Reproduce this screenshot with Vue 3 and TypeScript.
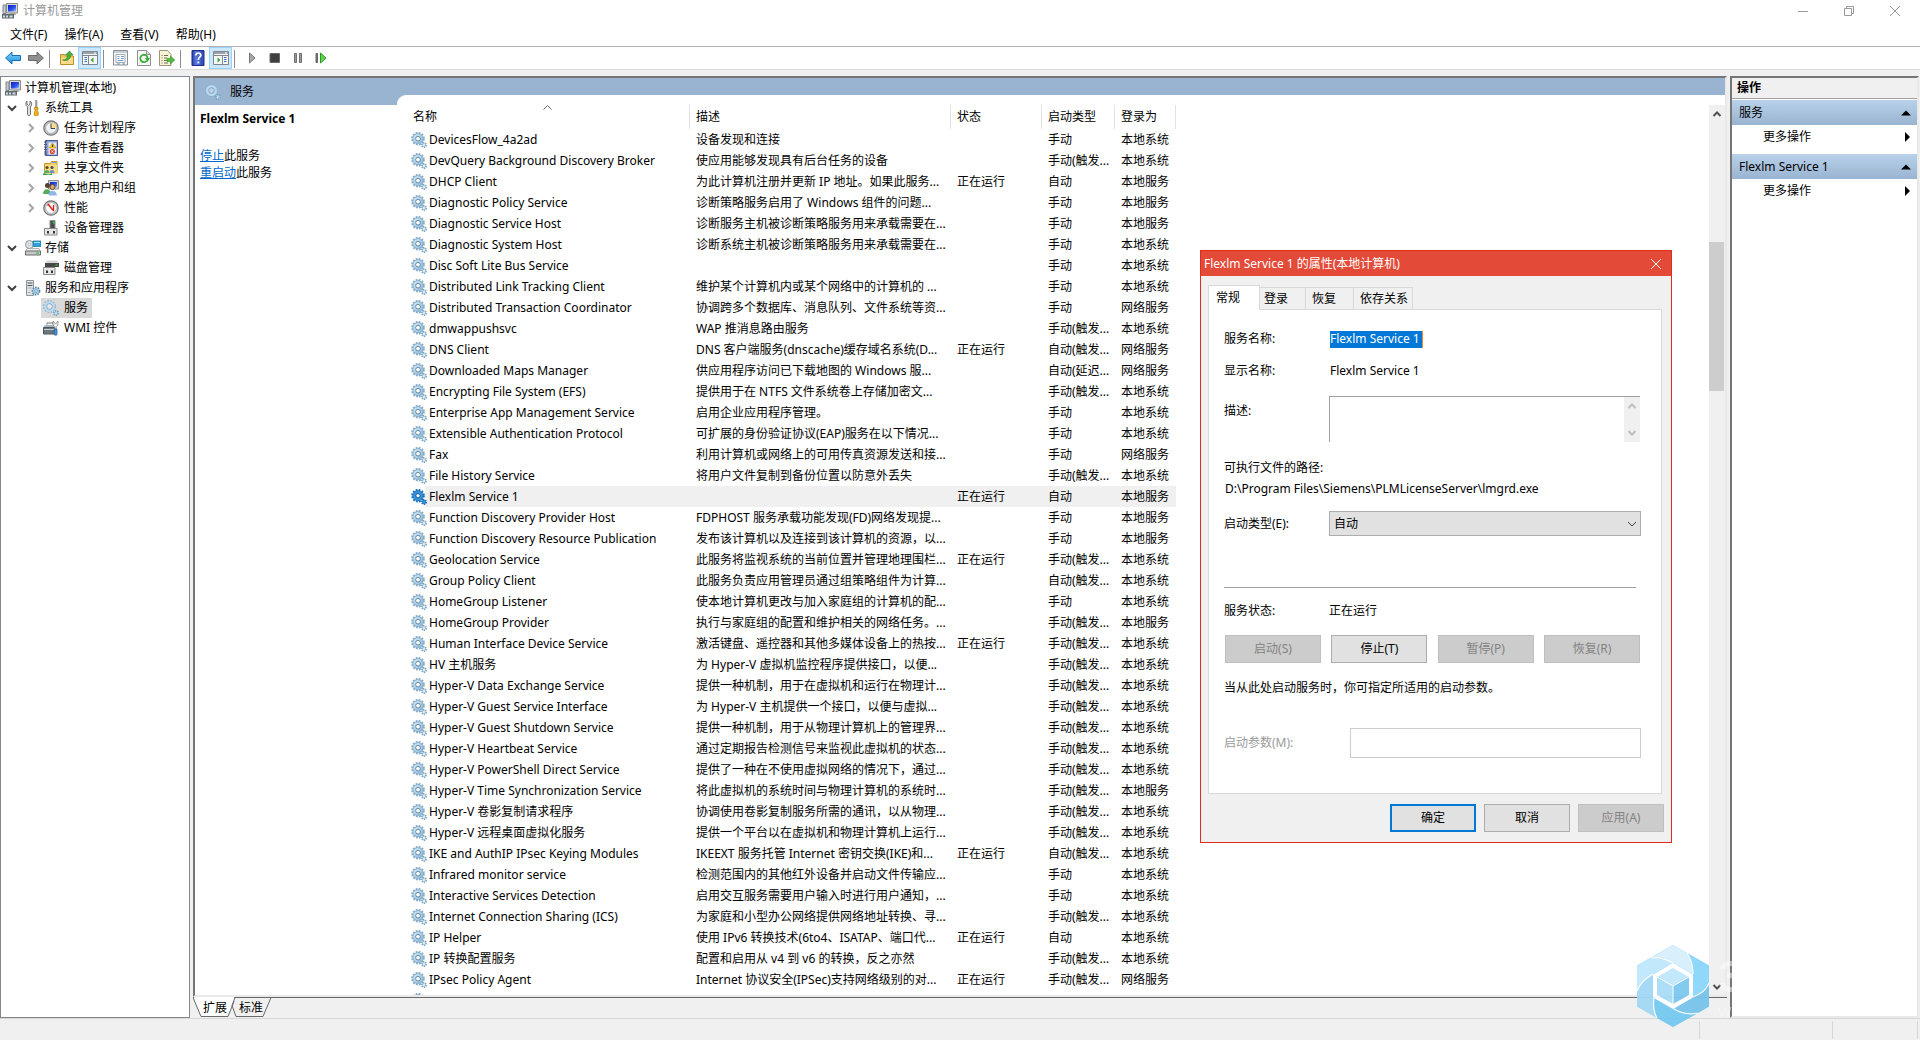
<script setup lang="ts">
import { ref } from 'vue'

interface Service {
  name: string
  desc: string
  running?: boolean
  start: string
  logon: string
}

interface TreeNode {
  label: string
  icon: string
  level: number
  arrow?: 'open' | 'closed'
  selected?: boolean
}

const menus = ['文件(F)', '操作(A)', '查看(V)', '帮助(H)']

const toolGroups = [
  [
    { icon: 'back', title: '后退' },
    { icon: 'forward', title: '前进' },
  ],
  [
    { icon: 'folder-up', title: '上移' },
    { icon: 'pane-left', title: '显示/隐藏控制台树', on: true },
  ],
  [
    { icon: 'props', title: '属性' },
    { icon: 'refresh', title: '刷新' },
    { icon: 'export', title: '导出列表' },
  ],
  [
    { icon: 'help', title: '帮助' },
    { icon: 'pane-right', title: '显示/隐藏操作窗格', on: true },
  ],
  [
    { icon: 'play', title: '启动服务' },
    { icon: 'stop', title: '停止服务' },
    { icon: 'pause', title: '暂停服务' },
    { icon: 'restart', title: '重启动服务' },
  ],
]

const tree: TreeNode[] = [
  { label: '计算机管理(本地)', icon: 'computer', level: 0 },
  { label: '系统工具', icon: 'tools', level: 1, arrow: 'open' },
  { label: '任务计划程序', icon: 'clock', level: 2, arrow: 'closed' },
  { label: '事件查看器', icon: 'events', level: 2, arrow: 'closed' },
  { label: '共享文件夹', icon: 'shared', level: 2, arrow: 'closed' },
  { label: '本地用户和组', icon: 'users', level: 2, arrow: 'closed' },
  { label: '性能', icon: 'perf', level: 2, arrow: 'closed' },
  { label: '设备管理器', icon: 'device', level: 2 },
  { label: '存储', icon: 'storage', level: 1, arrow: 'open' },
  { label: '磁盘管理', icon: 'disk', level: 2 },
  { label: '服务和应用程序', icon: 'server', level: 1, arrow: 'open' },
  { label: '服务', icon: 'gears-pale', level: 2, selected: true },
  { label: 'WMI 控件', icon: 'wmi', level: 2 },
]

const M = '手动'
const MT = '手动(触发...'
const A = '自动'
const AT = '自动(触发...'
const SYS = '本地系统'
const LOC = '本地服务'
const NET = '网络服务'

const services: Service[] = [
  { name: 'DevicesFlow_4a2ad', desc: '设备发现和连接', start: M, logon: SYS },
  { name: 'DevQuery Background Discovery Broker', desc: '使应用能够发现具有后台任务的设备', start: MT, logon: SYS },
  { name: 'DHCP Client', desc: '为此计算机注册并更新 IP 地址。如果此服务...', running: true, start: A, logon: LOC },
  { name: 'Diagnostic Policy Service', desc: '诊断策略服务启用了 Windows 组件的问题...', start: M, logon: LOC },
  { name: 'Diagnostic Service Host', desc: '诊断服务主机被诊断策略服务用来承载需要在...', start: M, logon: LOC },
  { name: 'Diagnostic System Host', desc: '诊断系统主机被诊断策略服务用来承载需要在...', start: M, logon: SYS },
  { name: 'Disc Soft Lite Bus Service', desc: '', start: M, logon: SYS },
  { name: 'Distributed Link Tracking Client', desc: '维护某个计算机内或某个网络中的计算机的 ...', start: M, logon: SYS },
  { name: 'Distributed Transaction Coordinator', desc: '协调跨多个数据库、消息队列、文件系统等资...', start: M, logon: NET },
  { name: 'dmwappushsvc', desc: 'WAP 推消息路由服务', start: MT, logon: SYS },
  { name: 'DNS Client', desc: 'DNS 客户端服务(dnscache)缓存域名系统(D...', running: true, start: AT, logon: NET },
  { name: 'Downloaded Maps Manager', desc: '供应用程序访问已下载地图的 Windows 服...', start: '自动(延迟...', logon: NET },
  { name: 'Encrypting File System (EFS)', desc: '提供用于在 NTFS 文件系统卷上存储加密文...', start: MT, logon: SYS },
  { name: 'Enterprise App Management Service', desc: '启用企业应用程序管理。', start: M, logon: SYS },
  { name: 'Extensible Authentication Protocol', desc: '可扩展的身份验证协议(EAP)服务在以下情况...', start: M, logon: SYS },
  { name: 'Fax', desc: '利用计算机或网络上的可用传真资源发送和接...', start: M, logon: NET },
  { name: 'File History Service', desc: '将用户文件复制到备份位置以防意外丢失', start: MT, logon: SYS },
  { name: 'Flexlm Service 1', desc: '', running: true, start: A, logon: LOC },
  { name: 'Function Discovery Provider Host', desc: 'FDPHOST 服务承载功能发现(FD)网络发现提...', start: M, logon: LOC },
  { name: 'Function Discovery Resource Publication', desc: '发布该计算机以及连接到该计算机的资源，以...', start: M, logon: LOC },
  { name: 'Geolocation Service', desc: '此服务将监视系统的当前位置并管理地理围栏...', running: true, start: MT, logon: SYS },
  { name: 'Group Policy Client', desc: '此服务负责应用管理员通过组策略组件为计算...', start: AT, logon: SYS },
  { name: 'HomeGroup Listener', desc: '使本地计算机更改与加入家庭组的计算机的配...', start: M, logon: SYS },
  { name: 'HomeGroup Provider', desc: '执行与家庭组的配置和维护相关的网络任务。...', start: MT, logon: LOC },
  { name: 'Human Interface Device Service', desc: '激活键盘、遥控器和其他多媒体设备上的热按...', running: true, start: MT, logon: SYS },
  { name: 'HV 主机服务', desc: '为 Hyper-V 虚拟机监控程序提供接口，以便...', start: MT, logon: SYS },
  { name: 'Hyper-V Data Exchange Service', desc: '提供一种机制，用于在虚拟机和运行在物理计...', start: MT, logon: SYS },
  { name: 'Hyper-V Guest Service Interface', desc: '为 Hyper-V 主机提供一个接口，以便与虚拟...', start: MT, logon: SYS },
  { name: 'Hyper-V Guest Shutdown Service', desc: '提供一种机制，用于从物理计算机上的管理界...', start: MT, logon: SYS },
  { name: 'Hyper-V Heartbeat Service', desc: '通过定期报告检测信号来监视此虚拟机的状态...', start: MT, logon: SYS },
  { name: 'Hyper-V PowerShell Direct Service', desc: '提供了一种在不使用虚拟网络的情况下，通过...', start: MT, logon: SYS },
  { name: 'Hyper-V Time Synchronization Service', desc: '将此虚拟机的系统时间与物理计算机的系统时...', start: MT, logon: LOC },
  { name: 'Hyper-V 卷影复制请求程序', desc: '协调使用卷影复制服务所需的通讯，以从物理...', start: MT, logon: SYS },
  { name: 'Hyper-V 远程桌面虚拟化服务', desc: '提供一个平台以在虚拟机和物理计算机上运行...', start: MT, logon: SYS },
  { name: 'IKE and AuthIP IPsec Keying Modules', desc: 'IKEEXT 服务托管 Internet 密钥交换(IKE)和...', running: true, start: AT, logon: SYS },
  { name: 'Infrared monitor service', desc: '检测范围内的其他红外设备并启动文件传输应...', start: M, logon: SYS },
  { name: 'Interactive Services Detection', desc: '启用交互服务需要用户输入时进行用户通知，...', start: M, logon: SYS },
  { name: 'Internet Connection Sharing (ICS)', desc: '为家庭和小型办公网络提供网络地址转换、寻...', start: MT, logon: SYS },
  { name: 'IP Helper', desc: '使用 IPv6 转换技术(6to4、ISATAP、端口代...', running: true, start: A, logon: SYS },
  { name: 'IP 转换配置服务', desc: '配置和启用从 v4 到 v6 的转换，反之亦然', start: MT, logon: SYS },
  { name: 'IPsec Policy Agent', desc: 'Internet 协议安全(IPSec)支持网络级别的对...', running: true, start: MT, logon: NET },
  { name: '', desc: '', start: '', logon: '' },
]

const current = ref('Flexlm Service 1')
const startType = ref('自动')
const params = ref('')
const description = ref('')
const actionGroups = ['服务', 'Flexlm Service 1']
</script>

<template>
  <div class="window">
    <svg class="defs" aria-hidden="true">
      <defs>
        <linearGradient id="gGear" x1="0" y1="0" x2="1" y2="1">
          <stop offset="0" stop-color="#dceefa" />
          <stop offset="1" stop-color="#86b4d4" />
        </linearGradient>
        <linearGradient id="gScreen" x1="0" y1="0" x2="1" y2="1">
          <stop offset="0" stop-color="#0a1cc0" />
          <stop offset="0.6" stop-color="#2f55ec" />
          <stop offset="1" stop-color="#a9c8ff" />
        </linearGradient>
        <linearGradient id="gBlue" x1="0" y1="0" x2="0" y2="1">
          <stop offset="0" stop-color="#7fd4fb" />
          <stop offset="1" stop-color="#1c8fe0" />
        </linearGradient>
        <linearGradient id="gHelp" x1="0" y1="0" x2="1" y2="0">
          <stop offset="0" stop-color="#2438a0" />
          <stop offset="0.3" stop-color="#5a78dc" />
          <stop offset="1" stop-color="#2c49b8" />
        </linearGradient>
      </defs>
      <symbol id="i-computer" viewBox="0 0 16 16">
        <path d="M4.500 0.500h11v9.500h-11z" fill="#d9d9d2" stroke="#8d8d87" />
        <path d="M6 2h8v6.500H6z" fill="url(#gScreen)" />
        <path d="M8 10h5l1 2H7z" fill="#a5a59e" />
        <path d="M1 2h3v8.500H1z" fill="#c2cacd" stroke="#7d888d" />
        <path d="M0 11h12v4.500H0z" fill="#5f6d73" />
        <path d="M1 12.500h2v2H1zM4 12.500h2v2H4zM7.500 12.500h3v2h-3z" fill="#d4dcdf" />
      </symbol>
      <symbol id="i-tools" viewBox="0 0 16 16">
        <path d="M2 1v3l1.500 1.500L5 4V1c1.500 1 2 2.500 1.500 4L5.500 7v7.500c0 1.300-3 1.300-3 0V7L1.200 5.500C.5 4 .8 2 2 1z" fill="#dedede" stroke="#777" />
        <path d="M10.500.5h1.500v7h-1.500z" fill="#a7a7a7" stroke="#777" stroke-width=".5" />
        <path d="M9.500 7.500h3.500v2.200h-1v1l1.200 1v3.500c-.8.8-3 .8-3.900 0v-3.500l1.200-1v-1h-1z" fill="#f0b21c" stroke="#b77f05" stroke-width=".7" />
      </symbol>
      <symbol id="i-clock" viewBox="0 0 16 16">
        <circle cx="8" cy="8" r="7.200" fill="#c9c9c9" stroke="#747474" stroke-width="1.200" />
        <circle cx="8" cy="8" r="5.400" fill="#eef4fa" stroke="#9d9d9d" stroke-width=".7" />
        <path d="M8 8V2.600A5.400 5.400 0 0 1 13.400 8z" fill="#ffdc8a" />
        <path d="M8 3.500V8.500h4" fill="none" stroke="#444" />
      </symbol>
      <symbol id="i-events" viewBox="0 0 16 16">
        <path d="M2.500.5h12v15h-12z" fill="#8ea2d8" stroke="#46568f" />
        <path d="M5.500 2.500h8v12h-8z" fill="#e9e9f2" />
        <path d="M1 2h3M1 4.500h3M1 7h3M1 9.500h3M1 12h3M1 14h3" stroke="#555d78" />
        <path d="M9.500 3l3.500 5H6.200z" fill="#ffd21f" stroke="#b58a00" stroke-width=".6" />
        <path d="M9.600 4.500v2.500" stroke="#222" />
        <circle cx="9.300" cy="11.500" r="2.600" fill="#d9412f" />
        <path d="M8.200 10.400l2.200 2.200m0-2.200l-2.200 2.200" stroke="#fff" stroke-width=".9" />
      </symbol>
      <symbol id="i-shared" viewBox="0 0 16 16">
        <path d="M1.500 3.500h6l1-2h5.500v12H1.500z" fill="#f2cf68" stroke="#c3972a" />
        <path d="M9 2.500h4" stroke="#5aa9e6" />
        <path d="M2 5h12v9H2z" fill="#f8dc85" />
        <circle cx="4" cy="7.500" r="1.600" fill="#6b4523" />
        <circle cx="9" cy="7.500" r="1.600" fill="#4b4f5c" />
        <path d="M1.500 13c0-4 5-4 5 0z" fill="#4faf6b" />
        <path d="M6.500 13c0-4 5-4 5 0z" fill="#6e8fc7" />
        <path d="M0 13.500c2-1 4 1.500 7 .5l2-1v2H0z" fill="#38a860" />
      </symbol>
      <symbol id="i-users" viewBox="0 0 16 16">
        <path d="M5.500.5h10v8.500h-10z" fill="#d9d9d2" stroke="#8d8d87" />
        <path d="M7 2h7v5.500H7z" fill="url(#gScreen)" />
        <circle cx="4.500" cy="5.500" r="2.500" fill="#59402a" />
        <circle cx="9.500" cy="7" r="2.500" fill="#d9a877" stroke="#6a4a2b" />
        <path d="M0 14c0-6.500 7.500-6.500 8 0z" fill="#58ab5b" />
        <path d="M5.500 15.500c0-6.500 8-6.500 8.500 0z" fill="#8cb9e8" />
      </symbol>
      <symbol id="i-perf" viewBox="0 0 16 16">
        <circle cx="8" cy="8" r="7.200" fill="#d4d4d4" stroke="#6e6e6e" stroke-width="1.200" />
        <circle cx="8" cy="8" r="5.400" fill="#fff" stroke="#9d9d9d" stroke-width=".7" />
        <path d="M4.500 5.500l1-1L8.500 8.500 11 11M10.500 5v6" fill="none" stroke="#d52119" stroke-width="1.400" />
      </symbol>
      <symbol id="i-device" viewBox="0 0 16 16">
        <path d="M7 0.500h5v9H7z" fill="#4b4b4b" stroke="#8a8a8a" />
        <circle cx="10.500" cy="2.500" r="1" fill="#37d845" />
        <path d="M1.500 8.500h12.500v6.500H1.500z" fill="#e6e6e6" stroke="#8b8b8b" />
        <path d="M4 11h2v2.500H4zM10 11h2v2.500h-2z" fill="#333" />
      </symbol>
      <symbol id="i-storage" viewBox="0 0 16 16">
        <circle cx="4.500" cy="4.500" r="4" fill="#dfe4e6" stroke="#8f989c" />
        <circle cx="4.500" cy="4.500" r="1.200" fill="#fff" stroke="#8f989c" stroke-width=".6" />
        <path d="M8 1h8v5.500H8z" fill="#2aa0d8" stroke="#1c6f9c" stroke-width=".7" />
        <path d="M9 2h6v1H9z" fill="#a9e2fa" />
        <path d="M2 8.500h12l1.500 3H.5z" fill="#ededed" stroke="#9b9b9b" stroke-width=".7" />
        <path d="M.5 11h15v4H.5z" fill="#c7c7c7" stroke="#6d6d6d" />
        <path d="M11 12.500h3v1.200h-3z" fill="#35c545" />
      </symbol>
      <symbol id="i-disk" viewBox="0 0 16 16">
        <path d="M4 0.500h10l1.500 2.500H2.500z" fill="#d4d4d4" />
        <path d="M2 3h14v4H2z" fill="#474747" />
        <path d="M12.500 4.500h2v1h-2z" fill="#37d845" />
        <path d="M.5 7.500h11.500v7H.5z" fill="#e6e6e6" stroke="#8b8b8b" />
        <path d="M3 10.500h2v2.500H3zM8 10.500h2v2.500H8z" fill="#333" />
      </symbol>
      <symbol id="i-server" viewBox="0 0 16 16">
        <path d="M1.500.5h7v15h-7z" fill="#dfe3e6" stroke="#8d969b" />
        <path d="M2.500 3h5M2.500 5.500h5" stroke="#4e5a60" />
        <path d="M2.500 8h4M2.500 12.500h3" stroke="#a5afb4" />
        <circle cx="11" cy="11" r="3.600" fill="#a9cbe2" stroke="#5688ac" stroke-width="1.600" stroke-dasharray="1.600 1" />
        <circle cx="11" cy="11" r="2.800" fill="#a9cbe2" />
        <circle cx="11" cy="11" r="1.300" fill="#fff" stroke="#5688ac" stroke-width=".7" />
      </symbol>
      <symbol id="i-gears" viewBox="0 0 16 16">
        <circle cx="7" cy="6.700" r="5.800" fill="none" stroke="#86abc6" stroke-width="2" stroke-dasharray="1.800 1.240" />
        <circle cx="7" cy="6.700" r="5.100" fill="url(#gGear)" stroke="#7ba6c6" stroke-width=".8" />
        <circle cx="7" cy="6.700" r="2.300" fill="#fff" stroke="#567f9f" stroke-width=".9" />
        <circle cx="13" cy="13" r="2.200" fill="#c2dbeb" stroke="#7ba4c2" stroke-width="1.600" stroke-dasharray="1.200 .9" />
        <circle cx="13" cy="13" r=".8" fill="#fff" />
      </symbol>
      <symbol id="i-gears-blue" viewBox="0 0 16 16">
        <circle cx="7" cy="6.700" r="5.800" fill="none" stroke="#1673bd" stroke-width="2" stroke-dasharray="1.800 1.240" />
        <circle cx="7" cy="6.700" r="5.100" fill="#3c94d8" stroke="#0f6bb8" stroke-width=".8" />
        <circle cx="7" cy="6.700" r="2.200" fill="#eaf5ff" stroke="#0a5a9f" />
        <circle cx="13" cy="13" r="2.200" fill="#3c94d8" stroke="#0f6bb8" stroke-width="1.600" stroke-dasharray="1.200 .9" />
      </symbol>
      <symbol id="i-gears-pale" viewBox="0 0 16 16">
        <circle cx="6.500" cy="6.500" r="5.500" fill="none" stroke="#86aecb" stroke-width="1.800" stroke-dasharray="1.700 1.180" />
        <circle cx="6.500" cy="6.500" r="4.200" fill="none" stroke="#b9d9ee" stroke-width="2.600" />
        <circle cx="6.500" cy="6.500" r="2.800" fill="#fff" fill-opacity=".4" stroke="#6b98b9" stroke-width=".7" />
        <circle cx="13" cy="13" r="2.200" fill="#bcd8ea" stroke="#6f9dbd" stroke-width="1.500" stroke-dasharray="1.200 .9" />
      </symbol>
      <symbol id="i-wmi" viewBox="0 0 16 16">
        <path d="M4 4.500V3h6v1.500" fill="none" stroke="#6b7780" />
        <path d="M2 5h10l-1 3H0z" fill="#a9b3b9" />
        <path d="M.5 7.500h11v6.500H.5z" fill="#6c7880" stroke="#4d575d" />
        <path d="M1 9.500h10" stroke="#c4ccd0" />
        <path d="M10 1l2.500 3L15 1v4l-1.800 1.500V9h-1.500V6.500L10 5z" fill="#ececec" stroke="#7c7c7c" stroke-width=".7" />
        <path d="M11.200 9h2.800v5.500c-.5 1-2.300 1-2.800 0z" fill="#4a90d6" stroke="#245c98" stroke-width=".7" />
      </symbol>

      <symbol id="i-back" viewBox="0 0 16 16">
        <path d="M.6 8L7 2v3.500h8.500v5H7V14z" fill="url(#gBlue)" stroke="#1a6fb4" />
      </symbol>
      <symbol id="i-forward" viewBox="0 0 16 16">
        <path d="M15.400 8L9 2v3.500H.5v5H9V14z" fill="#8f8f8f" stroke="#6b6b6b" />
      </symbol>
      <symbol id="i-folder-up" viewBox="0 0 16 16">
        <path d="M1.500 4.500h4l1 1.500h8v8.500h-13z" fill="#eec65d" stroke="#b98f2a" />
        <path d="M2 7.500h12v6.500H2z" fill="#f8dc8c" />
        <path d="M3.500 10c3 0 5-1.500 5.200-5H6.500L10.500 1l3.500 4h-2.300C11.500 9.500 8 11.500 3.500 10z" fill="#45b33b" stroke="#2b8126" stroke-width=".6" />
      </symbol>
      <symbol id="i-pane-left" viewBox="0 0 16 16">
        <path d="M.5 1.500h15v13H.5z" fill="#f4f6f8" stroke="#80868c" />
        <path d="M1 2h14v2H1z" fill="#9aa3ab" />
        <path d="M12 2.500h2v1h-2z" fill="#fff" />
        <path d="M1 5.500h14M6.500 6v8" stroke="#80868c" />
        <path d="M2.500 7.500h2.500M2.500 9.500h2.500M2.500 11.500h2.500" stroke="#3a72c0" />
        <path d="M11.500 7.500v5L8.500 10z" fill="#3aa832" />
      </symbol>
      <symbol id="i-pane-right" viewBox="0 0 16 16">
        <path d="M.5 1.500h15v13H.5z" fill="#f4f6f8" stroke="#80868c" />
        <path d="M1 2h14v2H1z" fill="#9aa3ab" />
        <path d="M12 2.500h2v1h-2z" fill="#fff" />
        <path d="M1 5.500h14M9.500 6v8" stroke="#80868c" />
        <path d="M11 7.500h2.500M11 9.500h2.500M11 11.500h2.500" stroke="#3a72c0" />
        <path d="M4.500 7.500v5l3-2.500z" fill="#3aa832" />
      </symbol>
      <symbol id="i-props" viewBox="0 0 16 16">
        <path d="M.5.5h14v14.500H.5z" fill="#f4f6f8" stroke="#8a9097" />
        <path d="M1 2h13" stroke="#9aa3ab" />
        <path d="M3 4.500h9v8H3z" fill="#fff" stroke="#a5adb5" />
        <path d="M4.500 6.500h2M8 6.500h3M4.500 8.500h2M8 8.500h3M4.500 10.500h6" stroke="#7a9dd0" />
        <path d="M4 14h3M9 14h3" stroke="#8a9097" />
      </symbol>
      <symbol id="i-refresh" viewBox="0 0 16 16">
        <path d="M1.500.5h9l4 4v11h-13z" fill="#f7f7f7" stroke="#8f8f8f" />
        <path d="M10.500.5v4h4" fill="#ddd" stroke="#8f8f8f" />
        <path d="M10.800 10.800A3.700 3.700 0 1 1 11.600 8" fill="none" stroke="#3aac38" stroke-width="1.800" />
        <path d="M9 8h5l-2.500 4z" fill="#3aac38" />
      </symbol>
      <symbol id="i-export" viewBox="0 0 16 16">
        <path d="M.5.5h8l3.500 4v11H.5z" fill="#fbf3d2" stroke="#9a957e" />
        <path d="M2.500 5.500h1M5 5.500h4M2.500 8h1M5 8h3M2.500 10.500h1M5 10.500h3M2.500 13h1M5 13h4" stroke="#6b6b6b" />
        <path d="M8 8.500h3.500V6l4.300 4-4.300 4v-2.500H8z" fill="#4fbe3e" stroke="#36922a" stroke-width=".6" />
      </symbol>
      <symbol id="i-help" viewBox="0 0 16 16">
        <path d="M2 .5h12v15H2z" fill="url(#gHelp)" stroke="#1c2f88" />
        <path d="M5.800 5.600C5.800 2 11 2.300 10.800 5.300 10.700 7.200 8.300 7.300 8.300 10" fill="none" stroke="#fff" stroke-width="1.700" />
        <path d="M7.400 11.500h1.900v1.900H7.400z" fill="#fff" />
      </symbol>
      <symbol id="i-play" viewBox="0 0 16 16">
        <path d="M5.500 3v10l5.500-5z" fill="#a9a9a9" stroke="#767676" />
      </symbol>
      <symbol id="i-stop" viewBox="0 0 16 16">
        <path d="M3 3.500h9.500v9H3z" fill="#3f3f3f" stroke="#6a6a6a" />
      </symbol>
      <symbol id="i-pause" viewBox="0 0 16 16">
        <path d="M4.500 3.500h2v9h-2zM9.500 3.500h2v9h-2z" fill="#999" stroke="#737373" />
      </symbol>
      <symbol id="i-restart" viewBox="0 0 16 16">
        <path d="M3 3.500h1.500v9H3z" fill="#777" stroke="#666" />
        <path d="M7.500 3v10l5.500-5z" fill="#5fd44a" stroke="#2b9a22" />
      </symbol>
    </svg>

    <header class="titlebar">
      <svg class="ico"><use href="#i-computer" /></svg>
      <span class="caption">计算机管理</span>
      <div class="winbtns">
        <button type="button" aria-label="最小化"><svg viewBox="0 0 12 12"><path d="M1 6.500h10" /></svg></button>
        <button type="button" aria-label="向下还原"><svg viewBox="0 0 12 12"><path d="M1.500 3.500h7v7h-7zM3.500 3.500v-2h7v7h-2" /></svg></button>
        <button type="button" aria-label="关闭"><svg viewBox="0 0 12 12"><path d="M1 1l10 10M11 1L1 11" /></svg></button>
      </div>
    </header>

    <nav class="menubar">
      <button v-for="m in menus" :key="m" type="button">{{ m }}</button>
    </nav>

    <div class="toolbar">
      <div v-for="(g, i) in toolGroups" :key="i" class="group">
        <button v-for="t in g" :key="t.icon" type="button" :class="{ on: 'on' in t }" :aria-label="t.title">
          <svg class="ico"><use :href="'#i-' + t.icon" /></svg>
        </button>
      </div>
    </div>

    <main class="panes">
      <aside class="tree">
        <ul>
          <li v-for="n in tree" :key="n.icon" :class="['lv' + n.level, { selected: n.selected }]">
            <span class="twisty">
              <svg v-if="n.arrow === 'open'" viewBox="0 0 10 10"><path d="M1 3l4 4 4-4" stroke="#404040" /></svg>
              <svg v-else-if="n.arrow === 'closed'" viewBox="0 0 10 10"><path d="M3 1l4 4-4 4" stroke="#a6a6a6" /></svg>
            </span>
            <span class="node">
              <svg class="ico"><use :href="'#i-' + n.icon" /></svg>
              <span>{{ n.label }}</span>
            </span>
          </li>
        </ul>
      </aside>

      <section class="center">
        <div class="view">
          <div class="info">
            <h1><svg class="ico"><use href="#i-gears-pale" /></svg>服务</h1>
            <div class="detail">
              <h2>{{ current }}</h2>
              <p><a href="#stop">停止</a>此服务</p>
              <p><a href="#restart">重启动</a>此服务</p>
            </div>
          </div>
          <div class="list">
            <div class="scroller">
              <table>
                <colgroup>
                  <col class="c-name" /><col class="c-desc" /><col class="c-state" /><col class="c-start" /><col class="c-logon" />
                </colgroup>
                <thead>
                  <tr>
                    <th class="sorted">名称<svg viewBox="0 0 9 5"><path d="M.5 4.500l4-4 4 4" /></svg></th>
                    <th>描述</th>
                    <th>状态</th>
                    <th>启动类型</th>
                    <th>登录为</th>
                  </tr>
                </thead>
                <tbody>
                  <tr v-for="s in services" :key="s.name" :class="{ active: s.name === current }">
                    <td>
                      <div class="svc">
                        <svg class="ico"><use :href="s.name === current ? '#i-gears-blue' : '#i-gears'" /></svg>
                        <span>{{ s.name }}</span>
                      </div>
                    </td>
                    <td>{{ s.desc }}</td>
                    <td>{{ s.running ? '正在运行' : '' }}</td>
                    <td>{{ s.start }}</td>
                    <td>{{ s.logon }}</td>
                  </tr>
                </tbody>
              </table>
            </div>
            <div class="vbar">
              <button type="button" aria-label="向上滚动"><svg viewBox="0 0 10 10"><path d="M1.500 7L5 3.500 8.500 7" /></svg></button>
              <span class="before"></span>
              <span class="thumb"></span>
              <span class="after"></span>
              <button type="button" aria-label="向下滚动"><svg viewBox="0 0 10 10"><path d="M1.500 3L5 6.500 8.500 3" /></svg></button>
            </div>
          </div>
        </div>
        <div class="sheets">
          <svg class="outline" viewBox="0 0 80 21" aria-hidden="true">
            <path d="M1 0l7 19.500h27L41.500 0z" fill="#fff" />
            <path d="M0 .5l8 19h27l6-15M43 .5h37M42 .5l-3 8 4 11h27L78 .5" fill="none" stroke="#696969" />
          </svg>
          <button type="button">扩展</button>
          <button type="button">标准</button>
        </div>
      </section>

      <aside class="actions">
        <h3>操作</h3>
        <section v-for="g in actionGroups" :key="g">
          <button type="button" class="band"><span>{{ g }}</span><svg viewBox="0 0 10 10"><path d="M0 7.500L5 2.500l5 5z" /></svg></button>
          <button type="button" class="more"><span>更多操作</span><svg viewBox="0 0 10 10"><path d="M3 0l5 5-5 5z" /></svg></button>
        </section>
      </aside>
    </main>

    <footer class="status"><span></span><span></span><span></span></footer>

    <div class="watermark" aria-hidden="true">
      <svg viewBox="0 0 72 82">
        <path d="M0 20.500L36 0l36 20.500v41L36 82 0 61.500z" fill="#8fd6f8" />
        <path d="M14 13L36 0l14 8c5 7 6 14 6 21L36 18z" fill="#d6effc" />
        <path d="M50 8l22 12.500V38c-3 8-9 11-16 14V29c0-7-1-14-6-21z" fill="#8ad6fa" />
        <path d="M72 38v23.500L61 68c-9 2-17 0-24-4l19-12c7-3 13-6 16-14z" fill="#77c3ea" />
        <path d="M61 68L36 82 20 73c-4-7-4-13-3-20l20 11c7 4 15 6 24 4z" fill="#75c9f1" />
        <path d="M20 73L0 61.500V46c3-8 9-13 16-17v24c0 7 0 13 4 20z" fill="#a1d8f5" />
        <path d="M0 46V20.500L14 13c8-1 15 1 22 5L16 29C9 33 3 38 0 46z" fill="#bfe7fc" />
        <path d="M14 13c8-1 15 1 22 5M50 8c5 7 6 14 6 21M72 38c-3 8-9 11-16 14M61 68c-9 2-17 0-24-4M20 73c-4-7-4-13-3-20M0 46c3-8 9-13 16-17" fill="none" stroke="#fff" stroke-width="1.200" />
        <path d="M36 18l20 11.500v23L36 64 16 52.500v-23z" fill="#fff" />
        <path d="M36 23l16 9-16 9-16-9z" fill="#bfe7fc" />
        <path d="M20 32l16 9v18l-16-9z" fill="#a9ddf7" />
        <path d="M52 32l-16 9v18l16-9z" fill="#7dc8ef" />
        <path d="M20 32l16 9 16-9M36 41v18" fill="none" stroke="#fff" />
      </svg>
      <div class="mark"><b>3</b><span>W</span></div>
    </div>

    <div class="dialog" role="dialog" aria-labelledby="dlg-title">
      <header>
        <span id="dlg-title">Flexlm Service 1 的属性(本地计算机)</span>
        <button type="button" aria-label="关闭"><svg viewBox="0 0 12 12"><path d="M1 1l10 10M11 1L1 11" /></svg></button>
      </header>
      <div class="tabs" role="tablist">
        <button type="button" role="tab" class="cur">常规</button>
        <button type="button" role="tab">登录</button>
        <button type="button" role="tab">恢复</button>
        <button type="button" role="tab">依存关系</button>
      </div>
      <div class="sheet">
        <div class="row"><label for="f-name">服务名称:</label><input id="f-name" class="picked" readonly :value="current" /></div>
        <div class="row"><label for="f-disp">显示名称:</label><input id="f-disp" class="plain" readonly :value="current" /></div>
        <div class="row desc">
          <label for="f-desc">描述:</label>
          <div class="memo">
            <textarea id="f-desc" v-model="description" readonly></textarea>
            <div class="mini">
              <svg viewBox="0 0 10 10"><path d="M1.500 7L5 3.500 8.500 7" /></svg>
              <svg viewBox="0 0 10 10"><path d="M1.500 3L5 6.500 8.500 3" /></svg>
            </div>
          </div>
        </div>
        <div class="path">
          <p>可执行文件的路径:</p>
          <p>D:\Program Files\Siemens\PLMLicenseServer\lmgrd.exe</p>
        </div>
        <div class="row type">
          <label for="f-type">启动类型(E):</label>
          <div class="combo">
            <select id="f-type" v-model="startType"><option>自动</option></select>
            <svg viewBox="0 0 10 10"><path d="M1 3l4 4 4-4" /></svg>
          </div>
        </div>
        <hr />
        <div class="row state"><span class="lab">服务状态:</span><span>正在运行</span></div>
        <div class="ctl">
          <button type="button" disabled>启动(S)</button>
          <button type="button">停止(T)</button>
          <button type="button" disabled>暂停(P)</button>
          <button type="button" disabled>恢复(R)</button>
        </div>
        <p class="hint">当从此处启动服务时，你可指定所适用的启动参数。</p>
        <div class="row args">
          <label for="f-args">启动参数(M):</label>
          <input id="f-args" v-model="params" disabled />
        </div>
      </div>
      <footer>
        <button type="button" class="default">确定</button>
        <button type="button">取消</button>
        <button type="button" disabled>应用(A)</button>
      </footer>
    </div>
  </div>
</template>

<style>
body {
  margin: 0;
  background: #f0f0f0;
}
</style>

<style scoped>
.window,
.window * {
  box-sizing: border-box;
}
.window {
  position: relative;
  display: flex;
  flex-direction: column;
  height: 100vh;
  overflow: hidden;
  background: #f0f0f0;
  color: #000;
  font: 12px/20px "Noto Sans", "Noto Sans CJK SC", sans-serif;
}
.window button,
.window input,
.window select,
.window textarea {
  margin: 0;
  padding: 0;
  border: 0;
  border-radius: 0;
  background: none;
  color: inherit;
  font: inherit;
  outline: 0;
}
.window h1,
.window h2,
.window h3,
.window p,
.window ul {
  margin: 0;
  padding: 0;
  font-size: 12px;
  list-style: none;
}
.defs {
  position: absolute;
  width: 0;
  height: 0;
}
.ico {
  display: block;
  flex: none;
  width: 16px;
  height: 16px;
}

.titlebar {
  display: flex;
  align-items: center;
  flex: none;
  height: 22px;
  padding: 0 2px;
  background: #fff;
}
.caption {
  flex: 1;
  padding-left: 5px;
  color: #999;
}
.winbtns {
  display: flex;
}
.winbtns button {
  display: flex;
  justify-content: center;
  align-items: center;
  width: 46px;
  height: 20px;
}
.winbtns svg {
  width: 12px;
  height: 12px;
  fill: none;
  stroke: #999;
}
.menubar {
  display: flex;
  gap: 17px;
  flex: none;
  height: 25px;
  padding: 3px 10px;
  border-bottom: 1px solid #b2b2b2;
  background: #fff;
}
.toolbar {
  display: flex;
  flex: none;
  height: 23px;
  padding-left: 1px;
  border-bottom: 1px solid #d9d9d9;
  background: #fff;
}
.group {
  display: flex;
}
.group + .group::before {
  content: "";
  width: 1px;
  height: 18px;
  margin: 3px 5px 0 2px;
  background: #8d8d8d;
}
.group button {
  display: flex;
  justify-content: center;
  align-items: center;
  width: 23px;
  height: 22px;
}
.window .group .on {
  border: 1px solid #99d1ff;
  background: #cce8ff;
}

.panes {
  display: flex;
  flex: 1;
  min-height: 0;
  gap: 3px;
  padding: 6px 1px 0 0;
}
.tree {
  flex: none;
  width: 190px;
  border: 1px solid #828790;
  background: #fff;
}
.tree ul {
  padding-top: 1px;
}
.tree li {
  display: flex;
  height: 20px;
}
.twisty {
  display: flex;
  justify-content: center;
  align-items: center;
  width: 22px;
}
.twisty svg {
  width: 10px;
  height: 10px;
  fill: none;
  stroke-width: 2;
}
.lv0 .twisty {
  width: 2px;
}
.lv2 {
  padding-left: 19px;
}
.lv2 .twisty {
  width: 21px;
}
.node {
  display: flex;
  align-items: center;
  gap: 4px;
  padding: 0 4px 0 2px;
}
.lv2 .node {
  gap: 5px;
}
.selected .node {
  background: #d9d9d9;
}

.center {
  display: flex;
  flex-direction: column;
  flex: 1;
  min-width: 0;
}
.view {
  display: flex;
  flex: 1;
  min-height: 0;
  border: 2px solid;
  border-color: #767676 #e9e9e9 #e9e9e9 #767676;
  background: #99b4d1;
}
.info {
  display: flex;
  flex-direction: column;
  flex: none;
  width: 202px;
}
.info h1 {
  display: flex;
  align-items: center;
  gap: 9px;
  height: 27px;
  padding-left: 10px;
  font-weight: 400;
}
.detail {
  flex: 1;
  padding: 4px 5px;
  background: #fff;
}
.detail h2 {
  margin-bottom: 18px;
}
.detail p {
  line-height: 17px;
}
.detail a {
  color: #0066cc;
  text-decoration: underline;
}
.list {
  display: flex;
  flex: 1;
  min-width: 0;
  margin-top: 17px;
  padding-top: 10px;
  border-top-left-radius: 9px;
  background: #fff;
}
.scroller {
  flex: 1;
  min-width: 0;
  padding-left: 4px;
  overflow: hidden;
}
table {
  width: 775px;
  border-collapse: collapse;
  table-layout: fixed;
}
.c-name {
  width: 289px;
}
.c-desc {
  width: 261px;
}
.c-state {
  width: 91px;
}
.c-start {
  width: 73px;
}
.c-logon {
  width: 61px;
}
th,
td {
  padding: 0 0 0 6px;
  white-space: nowrap;
  text-align: left;
  font-weight: 400;
}
th {
  height: 24px;
  background: linear-gradient(#e2e2e2, #e2e2e2) right / 1px 100% no-repeat;
}
.sorted {
  position: relative;
  padding-left: 12px;
}
.sorted svg {
  position: absolute;
  top: 0;
  left: 49%;
  width: 9px;
  height: 5px;
  fill: none;
  stroke: #6d6d6d;
}
td {
  height: 21px;
}
td:first-child {
  padding-left: 10px;
}
.svc {
  display: flex;
  align-items: center;
  gap: 2px;
}
.active td {
  background: #f0f0f0;
}
.active td:first-child {
  background: linear-gradient(to right, #fff 24px, #f0f0f0 24px);
}
.vbar {
  display: flex;
  flex-direction: column;
  flex: none;
  width: 16px;
  background: #f0f0f0;
}
.vbar button {
  display: flex;
  justify-content: center;
  align-items: center;
  height: 17px;
}
.vbar svg {
  width: 10px;
  height: 10px;
  fill: none;
  stroke: #505050;
  stroke-width: 2;
}
.before {
  flex: 120;
}
.thumb {
  flex: 149;
  margin-right: 1px;
  background: #cdcdcd;
}
.after {
  flex: 588;
}

.sheets {
  position: relative;
  display: flex;
  flex: none;
  gap: 12px;
  height: 21px;
  padding-left: 10px;
  border-top: 1px solid #696969;
}
.outline {
  position: absolute;
  top: -1px;
  left: 0;
  width: 80px;
  height: 21px;
}
.sheets button {
  position: relative;
  height: 20px;
}

.actions {
  flex: none;
  width: 189px;
  border: 2px solid;
  border-color: #767676 #e9e9e9 #e9e9e9 #767676;
  background: #fff;
}
.actions h3 {
  height: 21px;
  margin-bottom: 1px;
  padding-left: 5px;
  border-bottom: 1px solid #a0a0a0;
  background: #f0f0f0;
  font-weight: 700;
}
.actions section {
  padding-bottom: 4px;
}
.actions button {
  display: flex;
  justify-content: space-between;
  align-items: center;
  width: 100%;
  height: 25px;
  text-align: left;
}
.window .band {
  padding: 0 6px 0 7px;
  background: linear-gradient(#b9d1ea, #99b4d1);
}
.window .more {
  padding: 0 5px 2px 31px;
}
.actions svg {
  width: 10px;
  height: 10px;
}

.status {
  display: flex;
  justify-content: flex-end;
  flex: none;
  height: 22px;
  padding: 2px 2px 1px 0;
  border-top: 1px solid #d7d7d7;
}
.status span {
  width: 85px;
  border-right: 1px solid #d7d7d7;
}
.status span:nth-child(2) {
  width: 133px;
}

.watermark {
  position: absolute;
  right: 171px;
  bottom: 13px;
  display: flex;
  align-items: center;
  gap: 9px;
  opacity: 0.95;
}
.watermark > svg {
  width: 72px;
  height: 82px;
}
.mark {
  display: flex;
  flex-direction: column;
  width: 31px;
  color: rgba(255, 255, 255, 0.5);
  font-family: "Liberation Sans", sans-serif;
}
.mark b {
  font-size: 44px;
  line-height: 52px;
}
.mark span {
  font-size: 14px;
  line-height: 18px;
}

.dialog {
  position: absolute;
  top: 250px;
  right: 248px;
  width: 472px;
  border: 1px solid #df2d1a;
  background: #f0f0f0;
}
.dialog header {
  display: flex;
  justify-content: space-between;
  align-items: center;
  height: 25px;
  padding: 0 9px 0 3px;
  background: #e34a38;
  color: #fff;
}
.dialog header button {
  display: flex;
}
.dialog header svg {
  width: 12px;
  height: 12px;
  fill: none;
  stroke: #fff;
}
.tabs {
  display: flex;
  align-items: flex-end;
  height: 33px;
  padding-left: 7px;
}
.window .tabs button {
  height: 22px;
  padding: 0 4px;
  border: 1px solid #d9d9d9;
  border-width: 1px 1px 0 0;
  text-align: left;
}
.tabs button:nth-child(2) {
  width: 46px;
}
.tabs button:nth-child(3) {
  width: 48px;
}
.window .tabs button:nth-child(n + 3) {
  padding-left: 6px;
}
.window .tabs .cur {
  position: relative;
  width: 52px;
  height: 25px;
  margin-bottom: -1px;
  padding: 0 7px 1px;
  border-left-width: 1px;
  background: #fff;
}
.sheet {
  margin: 0 9px 0 7px;
  padding: 13px 20px 35px 15px;
  border: 1px solid #d9d9d9;
  background: #fff;
}
.row {
  display: flex;
  align-items: center;
  height: 32px;
}
.row label,
.lab {
  flex: none;
  width: 105px;
}
.window .picked {
  width: 93px;
  height: 17px;
  margin-left: 1px;
  border-right: 1px solid #ff8728;
  background: #0078d7;
  color: #fff;
}
.window .plain {
  margin-left: 1px;
}
.desc {
  align-items: flex-start;
  height: 46px;
  margin-top: 9px;
}
.desc label {
  line-height: 30px;
}
.memo {
  display: flex;
  flex: 1;
  height: 46px;
  margin-right: 1px;
  border: 1px solid #a0a0a0;
  border-width: 1px 0 0 1px;
}
.memo textarea {
  flex: 1;
  min-width: 0;
  resize: none;
}
.mini {
  display: flex;
  flex-direction: column;
  justify-content: space-between;
  align-items: center;
  width: 16px;
  padding: 4px 0;
  background: #f0f0f0;
}
.mini svg {
  width: 10px;
  height: 10px;
  fill: none;
  stroke: #bfbfbf;
  stroke-width: 2;
}
.path {
  margin-top: 15px;
  line-height: 21px;
}
.path p + p {
  padding-left: 1px;
}
.type {
  height: 25px;
  margin-top: 12px;
}
.combo {
  position: relative;
  flex: 1;
  height: 25px;
}
.window .combo select {
  width: 100%;
  height: 25px;
  padding-left: 4px;
  border: 1px solid #adadad;
  background: #e1e1e1;
  appearance: none;
}
.combo svg {
  position: absolute;
  top: 8px;
  right: 4px;
  width: 10px;
  height: 10px;
  fill: none;
  stroke: #404040;
}
.sheet hr {
  height: 1px;
  margin: 51px 5px 13px 0;
  border: 0;
  background: #a0a0a0;
}
.state {
  height: 20px;
}
.ctl {
  display: flex;
  justify-content: space-between;
  margin: 14px 1px 15px 1px;
}
.window .ctl button,
.window .dialog footer button {
  width: 96px;
  height: 28px;
  border: 1px solid #adadad;
  background: #e1e1e1;
}
.window .dialog .ctl button:disabled,
.window .dialog footer button:disabled {
  border-color: #bfbfbf;
  background: #ccc;
  color: #838383;
}
.args {
  height: 30px;
  margin-top: 30px;
  color: #9a9a9a;
}
.window .args label {
  width: 126px;
}
.window .args input {
  flex: 1;
  min-width: 0;
  height: 30px;
  border: 1px solid #ccc;
  background: #fff;
}
.dialog footer {
  display: flex;
  justify-content: flex-end;
  gap: 8px;
  padding: 10px 7px;
}
.window .dialog footer button {
  width: 86px;
}
.window .dialog footer .default {
  border: 2px solid #0078d7;
}
</style>
